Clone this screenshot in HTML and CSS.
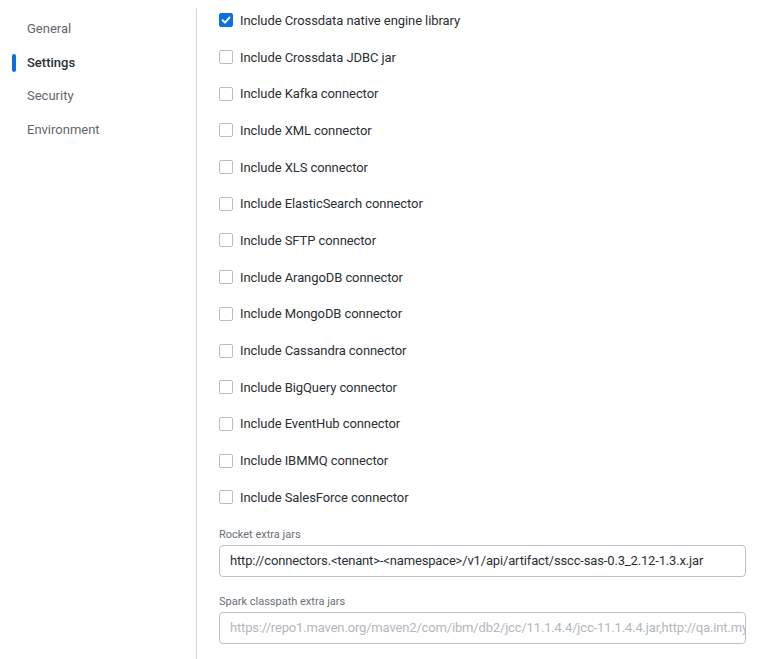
FILE: index.html
```html
<!DOCTYPE html>
<html>
<head>
<meta charset="utf-8">
<link rel="stylesheet" href="styles.css">
</head>
<body>
<div class="layout">
  <nav class="sidebar">
    <div class="nav-item">General</div>
    <div class="nav-item active">Settings</div>
    <div class="nav-item">Security</div>
    <div class="nav-item">Environment</div>
  </nav>
  <main class="content">
    <div class="checks">
      <label class="check"><span class="box checked"><svg viewBox="0 0 14 14" width="14" height="14"><path d="M3.6 7.2 L6 9.6 L10.4 4.6" fill="none" stroke="#fff" stroke-width="2" stroke-linecap="round" stroke-linejoin="round"/></svg></span>Include Crossdata native engine library</label>
      <label class="check"><span class="box"></span>Include Crossdata JDBC jar</label>
      <label class="check"><span class="box"></span>Include Kafka connector</label>
      <label class="check"><span class="box"></span>Include XML connector</label>
      <label class="check"><span class="box"></span>Include XLS connector</label>
      <label class="check"><span class="box"></span>Include ElasticSearch connector</label>
      <label class="check"><span class="box"></span>Include SFTP connector</label>
      <label class="check"><span class="box"></span>Include ArangoDB connector</label>
      <label class="check"><span class="box"></span>Include MongoDB connector</label>
      <label class="check"><span class="box"></span>Include Cassandra connector</label>
      <label class="check"><span class="box"></span>Include BigQuery connector</label>
      <label class="check"><span class="box"></span>Include EventHub connector</label>
      <label class="check"><span class="box"></span>Include IBMMQ connector</label>
      <label class="check"><span class="box"></span>Include SalesForce connector</label>
    </div>
    <div class="field first">
      <div class="field-label">Rocket extra jars</div>
      <div class="input">http://connectors.&lt;tenant&gt;-&lt;namespace&gt;/v1/api/artifact/sscc-sas-0.3_2.12-1.3.x.jar</div>
    </div>
    <div class="field">
      <div class="field-label">Spark classpath extra jars</div>
      <div class="input placeholder">https://repo1.maven.org/maven2/com/ibm/db2/jcc/11.1.4.4/jcc-11.1.4.4.jar,http://qa.int.myc</div>
    </div>
  </main>
</div>
</body>
</html>
```

FILE: styles.css
```css
* { box-sizing: border-box; }
html, body { margin: 0; padding: 0; background: #fff; }
body {
  font-family: "Roboto", "Liberation Sans", sans-serif;
  font-size: 13px;
  color: #2b2f36;
  width: 764px;
  height: 659px;
  overflow: hidden;
}
.layout {
  display: flex;
  align-items: flex-start;
}
.sidebar {
  width: 197px;
  flex: none;
  min-height: 650px;
  border-right: 1px solid #cfd6e0;
  margin-top: 9px;
  padding-top: 3px;
}
.nav-item {
  position: relative;
  height: 33.7px;
  line-height: 33.7px;
  padding-left: 27px;
  color: #62676f;
  font-size: 13px;
}
.nav-item.active {
  color: #2b2f36;
  font-weight: 500;
}
.nav-item.active::before {
  content: "";
  position: absolute;
  left: 12px;
  top: 8px;
  width: 4px;
  height: 18px;
  border-radius: 2px;
  background: #0a6fe0;
}
.content {
  flex: 1;
  min-width: 0;
  padding-left: 22px;
  padding-right: 18px;
  padding-top: 2px;
}
.checks {
  display: flex;
  flex-direction: column;
}
.check {
  display: flex;
  align-items: center;
  height: 36.7px;
  color: #2b2f36;
  letter-spacing: -0.08px;
}
.box {
  width: 14px;
  height: 14px;
  border: 1px solid #b8bec7;
  border-radius: 2px;
  margin-right: 7px;
  flex: none;
  display: flex;
  background: #fff;
}
.box.checked {
  background: #0a6fe0;
  border-color: #0a6fe0;
}
.box.checked svg { margin: -1px; }
.field { margin-top: 18px; }
.field.first { margin-top: 12px; }
.field-label {
  font-size: 11px;
  line-height: 14px;
  color: #6b7079;
  margin-bottom: 3px;
}
.input {
  height: 32px;
  border: 1px solid #b9c1cc;
  border-radius: 4px;
  padding: 0 10px;
  line-height: 30px;
  white-space: nowrap;
  overflow: hidden;
  color: #2b2f36;
  letter-spacing: -0.16px;
}
.input.placeholder { color: #b3b7be; }
```
